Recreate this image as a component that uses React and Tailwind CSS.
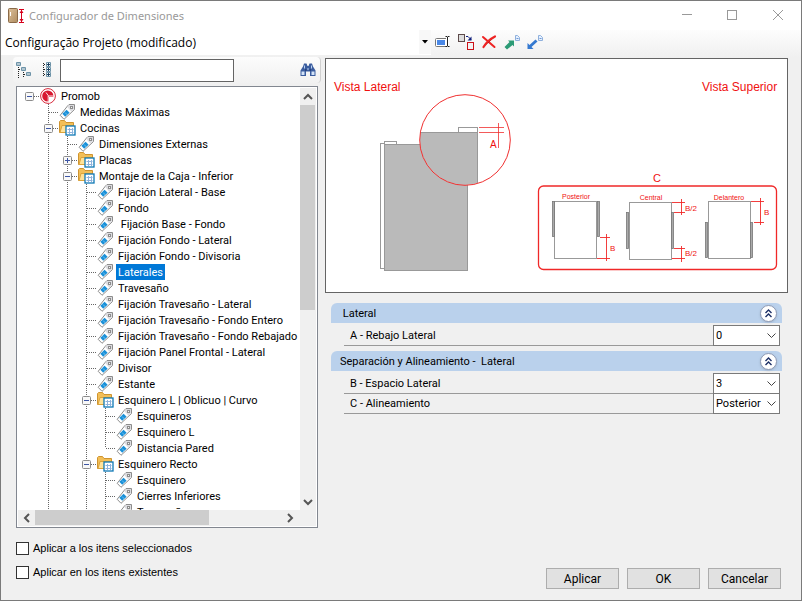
import { useState } from "react";

const TREE = [
  { id: 1, depth: 0, label: "Promob", icon: "promob", state: "open" },
  { id: 2, depth: 1, label: "Medidas Máximas" },
  { id: 3, depth: 1, label: "Cocinas", icon: "folder", state: "open" },
  { id: 4, depth: 2, label: "Dimensiones Externas" },
  { id: 5, depth: 2, label: "Placas", icon: "folder", state: "closed" },
  { id: 6, depth: 2, label: "Montaje de la Caja - Inferior", icon: "folder", state: "open" },
  { id: 7, depth: 3, label: "Fijación Lateral - Base" },
  { id: 8, depth: 3, label: "Fondo" },
  { id: 9, depth: 3, label: " Fijación Base - Fondo" },
  { id: 10, depth: 3, label: "Fijación Fondo - Lateral" },
  { id: 11, depth: 3, label: "Fijación Fondo - Divisoria" },
  { id: 12, depth: 3, label: "Laterales" },
  { id: 13, depth: 3, label: "Travesaño" },
  { id: 14, depth: 3, label: "Fijación Travesaño - Lateral" },
  { id: 15, depth: 3, label: "Fijación Travesaño - Fondo Entero" },
  { id: 16, depth: 3, label: "Fijación Travesaño - Fondo Rebajado" },
  { id: 17, depth: 3, label: "Fijación Panel Frontal - Lateral" },
  { id: 18, depth: 3, label: "Divisor" },
  { id: 19, depth: 3, label: "Estante" },
  { id: 20, depth: 3, label: "Esquinero L | Oblicuo | Curvo", icon: "folder", state: "open" },
  { id: 21, depth: 4, label: "Esquineros" },
  { id: 22, depth: 4, label: "Esquinero L" },
  { id: 23, depth: 4, label: "Distancia Pared", last: true },
  { id: 24, depth: 3, label: "Esquinero Recto", icon: "folder", state: "open" },
  { id: 25, depth: 4, label: "Esquinero" },
  { id: 26, depth: 4, label: "Cierres Inferiores" },
  { id: 27, depth: 4, label: "Travesaño" },
];

function AppIcon() {
  return (
    <svg width="17" height="16" viewBox="0 0 17 16" className="shrink-0">
      <defs>
        <linearGradient id="door" x1="0" y1="0" x2="1" y2="1">
          <stop offset="0" stopColor="#dcc09a" />
          <stop offset="1" stopColor="#b08d61" />
        </linearGradient>
      </defs>
      <rect x="0.5" y="0.5" width="9" height="14" rx="1" fill="url(#door)" stroke="#8a6a48" />
      <path d="M2.5 4v4" stroke="#fff" />
      <path d="M11 1.500h5M11 14.500h5M13.500 2v12" stroke="#d6001c" />
      <path d="M11.500 5l2-3 2 3zM11.500 11l2 3 2-3z" fill="#d6001c" />
    </svg>
  );
}

function TagIcon() {
  return (
    <svg width="18" height="16" viewBox="0 0 18 16">
      <path d="M9.500 2l1.500-1.500h5.500v5L6 15.300l-3.800-4z" fill="#fff" stroke="#8c8c8c" strokeLinejoin="round" />
      <path d="M9.300 3l2-2h4.700v4.200l-2.700 2.500z" fill="#dcdce0" />
      <rect x="12.500" y="2.500" width="2" height="2" fill="#f4f4f4" stroke="#8c8c8c" />
      <path d="M8.600 5.800l3 3-4.400 3.900-2.900-3z" fill="#1a90d8" />
      <path d="M7 8.500l2.500 2.500" stroke="#6dc0ee" />
    </svg>
  );
}

function FolderIcon() {
  return (
    <svg width="18" height="16" viewBox="0 0 18 16">
      <path d="M1.500 12.500v-11l1-1h4l1.500 2h7.500v10z" fill="#f3bf57" stroke="#cf9430" />
      <path d="M4 5.500h11l-2 7H2z" fill="#ffe29a" stroke="#dca43a" />
      <rect x="8" y="6" width="9" height="9" fill="#fff" stroke="#0e78b5" strokeWidth="1.300" />
      <path d="M9.500 9.500h6M9.500 12.500h6M11.500 8v6M14.500 8v6" stroke="#8fb2dc" />
    </svg>
  );
}

function PromobIcon() {
  return (
    <svg width="18" height="16" viewBox="0 0 18 16">
      <circle cx="9" cy="8" r="7.400" fill="#fff" stroke="#d8283a" />
      <circle cx="8.800" cy="8" r="5.600" fill="#d81830" />
      <path d="M9.200 14V7.500M9.200 7.500L7 4.500M9.200 8H14.500" fill="none" stroke="#fff" strokeWidth="0.900" />
      <path d="M10 9h5l-2 4-3 2z" fill="#fff" />
    </svg>
  );
}

function Guide() {
  return (
    <svg width="19" height="16" viewBox="0 0 19 16" className="shrink-0">
      <path d="M9.500 0v16" stroke="#666" strokeDasharray="1 1" />
    </svg>
  );
}

function Elbow({ node }) {
  return (
    <svg width="19" height="16" viewBox="0 0 19 16" className="shrink-0">
      {node.depth > 0 && (
        <path d={node.last ? "M9.500 0v8" : "M9.500 0v16"} stroke="#666" strokeDasharray="1 1" />
      )}
      <path d="M10 8.500h9" stroke="#666" strokeDasharray="1 1" />
      {node.state && (
        <>
          <rect x="5.500" y="4.500" width="8" height="8" rx="1" fill="#f8f8f8" stroke="#8c8c8c" />
          <path d={node.state === "open" ? "M7 8.500h5" : "M7 8.500h5M9.500 6v5"} stroke="#3c55a5" />
        </>
      )}
    </svg>
  );
}

function TreeRow({ node, selected, onSelect }) {
  const Icon = node.icon === "promob" ? PromobIcon : node.icon === "folder" ? FolderIcon : TagIcon;
  return (
    <li className="flex h-4 items-center whitespace-pre">
      {node.depth > 0 && <span className="w-[19px] shrink-0" />}
      {Array.from({ length: Math.max(0, node.depth - 1) }, (_, i) => (
        <Guide key={i} />
      ))}
      {node.state ? (
        <button type="button" aria-label={`Expandir ${node.label}`} className="shrink-0">
          <Elbow node={node} />
        </button>
      ) : (
        <Elbow node={node} />
      )}
      <button type="button" onClick={onSelect} className="flex h-4 items-center gap-0.5">
        <Icon />
        <span className={selected ? "h-4 bg-[#0078d7] px-0.5 leading-[18px] text-white" : "h-4 px-0.5 leading-[18px]"}>
          {node.label}
        </span>
      </button>
    </li>
  );
}

function Chevron({ d }) {
  return (
    <svg width="10" height="10" viewBox="0 0 10 10" fill="none" stroke="#555" strokeWidth="2">
      <path d={d} />
    </svg>
  );
}

function TreePanel() {
  const [selected, setSelected] = useState(12);
  return (
    <div className="ml-[3px] mr-[3px] flex min-h-0 flex-1 flex-col border border-[#828790] bg-white p-px">
      <div className="flex min-h-0 flex-1">
        <ul className="min-w-0 flex-1 overflow-hidden pl-0.5">
          {TREE.map((node) => (
            <TreeRow
              key={node.id}
              node={node}
              selected={node.id === selected}
              onSelect={() => setSelected(node.id)}
            />
          ))}
        </ul>
        <div className="flex w-4 shrink-0 flex-col bg-[#f0f0f0]">
          <button type="button" aria-label="Subir" className="flex h-[17px] items-center justify-center">
            <Chevron d="M1 7l4-4 4 4" />
          </button>
          <div className="h-[48.5%] w-[15px] bg-[#cdcdcd]" />
          <button type="button" aria-label="Bajar" className="mt-auto flex h-[17px] items-center justify-center">
            <Chevron d="M1 3l4 4 4-4" />
          </button>
        </div>
      </div>
      <div className="flex h-4 bg-[#f0f0f0] pr-[18px]">
        <button type="button" aria-label="Izquierda" className="flex w-[17px] items-center justify-center">
          <Chevron d="M7 1L3 5l4 4" />
        </button>
        <div className="h-[15px] w-[62%] bg-[#cdcdcd]" />
        <button type="button" aria-label="Derecha" className="ml-auto flex w-[17px] items-center justify-center">
          <Chevron d="M3 1l4 4-4 4" />
        </button>
      </div>
    </div>
  );
}

function TitleBar() {
  return (
    <header className="flex h-[29px] shrink-0 items-center bg-white pl-[7px]">
      <AppIcon />
      <h1 className="ml-1 flex-1 font-['Noto_Sans','Open_Sans',sans-serif] text-[11px] text-[#999]">
        Configurador de Dimensiones
      </h1>
      <button type="button" aria-label="Minimizar" className="flex w-[45px] justify-center">
        <svg width="12" height="12" viewBox="0 0 12 12" stroke="#999">
          <path d="M1 4.500h10" />
        </svg>
      </button>
      <button type="button" aria-label="Maximizar" className="flex w-[46px] justify-center">
        <svg width="12" height="12" viewBox="0 0 12 12" fill="none" stroke="#999">
          <rect x="1.500" y="0.500" width="9" height="9" />
        </svg>
      </button>
      <button type="button" aria-label="Cerrar" className="flex w-[46px] justify-center">
        <svg width="12" height="12" viewBox="0 0 12 12" stroke="#999">
          <path d="M1 0l10 10M11 0L1 10" />
        </svg>
      </button>
    </header>
  );
}

function SendIcon({ color, flip }) {
  return (
    <svg width="16" height="16" viewBox="0 0 16 16">
      <path
        d={flip ? "M0.500 15V9l2 2 6-5.500 2 2-6 5.500 2 2z" : "M0.500 13l5-5-1.500-1.500h6v6L8.500 11l-5.500 4.500z"}
        fill={color}
      />
      <path d="M11.500 1.500h2l2 2v3h-4z" fill="#e5f0ff" stroke="#8fb0dc" />
      <path d="M12.500 4.500h2" stroke="#6f9ad6" />
    </svg>
  );
}

function ConfigBar() {
  return (
    <div className="flex h-[27px] shrink-0 bg-linear-to-b from-[#fdfdfd] to-[#f0f0f0]">
      <div className="relative h-6 w-[430px]">
        <select
          aria-label="Configuración"
          className="h-[25px] w-full appearance-none bg-white pl-1 font-['Open_Sans','Noto_Sans',sans-serif] text-[12px]"
        >
          <option>Configuração Projeto (modificado)</option>
        </select>
        <span className="pointer-events-none absolute inset-y-0 right-0 flex w-3 items-center justify-center bg-[#f8f8f8]">
          <svg width="6" height="4" viewBox="0 0 6 4">
            <path d="M0 0h6L3 3.500z" />
          </svg>
        </span>
      </div>
      <div className="ml-1 flex h-6 items-center gap-[7px]">
        <button type="button" aria-label="Renombrar">
          <svg width="16" height="16" viewBox="0 0 16 16">
            <rect x="0.500" y="4.500" width="12" height="8" rx="1" fill="#fff" stroke="#777" />
            <rect x="2" y="6" width="8" height="5" fill="#4a88e6" />
            <path d="M12.500 3v10" stroke="#fff" strokeWidth="3" />
            <path d="M10.500 2.500h1.500l.5.500.5-.5h1.500M10.500 12.500h1.500l.5-.5.5.5h1.500M12.500 3v9" fill="none" stroke="#222" />
          </svg>
        </button>
        <button type="button" aria-label="Duplicar">
          <svg width="16" height="16" viewBox="0 0 16 16" fill="none">
            <rect x="0.500" y="0.500" width="6" height="7" fill="#ddd" stroke="#5d4a4a" />
            <rect x="9.500" y="8.500" width="6" height="7" fill="#f3f3f3" stroke="#cc1018" />
            <path d="M8 2.500h2l3 3" stroke="#11207c" />
            <path d="M13.500 2.500v4h-4z" fill="#11207c" />
          </svg>
        </button>
        <button type="button" aria-label="Eliminar">
          <svg width="16" height="16" viewBox="0 0 16 16" stroke="#ee2424" strokeLinecap="round">
            <path d="M2 3l11.500 10" strokeWidth="2" />
            <path d="M14 2.500C9 5 5 9 2.500 13" strokeWidth="2.200" />
          </svg>
        </button>
        <button type="button" aria-label="Exportar">
          <SendIcon color="#2c9b76" />
        </button>
        <button type="button" aria-label="Importar">
          <SendIcon color="#3579d0" flip />
        </button>
      </div>
    </div>
  );
}

function SearchBar() {
  return (
    <div className="flex h-[26px] shrink-0 items-center rounded-sm border-r border-[#d0d0d0] bg-linear-to-b from-[#fcfcfc] to-[#f1f1f1] pl-[3px] pr-1">
      <button type="button" aria-label="Expandir todo">
        <svg width="16" height="16" viewBox="0 0 16 16" fill="none">
          <path d="M2.500 5v11M7.500 10v6M3 7.500h2M8 12.500h2" stroke="#222" strokeDasharray="1 1" />
          <path d="M0.500 0.500h4v3h-4zM5.500 5.500h4v3h-4zM10.500 10.500h4v3h-4zM1 2h3M6 7h3M11 12h3" stroke="#6d93a8" />
        </svg>
      </button>
      <button type="button" aria-label="Contraer todo" className="ml-2">
        <svg width="16" height="16" viewBox="0 0 16 16" fill="none">
          <path d="M3.500 1v14M4 2.500h3M4 7.500h3M4 12.500h3" stroke="#222" strokeDasharray="1 1" />
          <path d="M6.500 0.500h4v4h-4zM6.500 5.500h4v4h-4zM6.500 10.500h4v4h-4z" stroke="#6d93a8" />
          <path d="M7 2.500h3M8.500 1v3M7 7.500h3M8.500 6v3M7 12.500h3M8.500 11v3" stroke="#1d4262" />
        </svg>
      </button>
      <input
        type="text"
        aria-label="Buscar"
        className="ml-1 h-[23px] w-[174px] border border-[#646464] bg-white px-1"
      />
      <button type="button" aria-label="Buscar siguiente" className="ml-auto">
        <svg width="16" height="16" viewBox="0 0 16 16">
          <path d="M4 1.500h2.500l1 2.500h1l1-2.500H12l1 3 2.500 4v5.500H10V9.500H6V14H0.500V8.500L3 4.500z" fill="#3a5c9e" />
          <path d="M1.500 9.500h3V13h-3zM11.500 9.500h3V13h-3z" fill="#d3e3f8" />
          <path d="M4.500 3.500v3M11.500 3.500v3M7 7h2" stroke="#b9d0f0" />
          <path d="M5 8h1.500M9.500 8H11" stroke="#16295e" />
        </svg>
      </button>
    </div>
  );
}

function Preview() {
  return (
    <figure className="border border-[#646464] bg-white">
      <svg
        viewBox="326 59 461 233"
        className="block h-auto w-full"
        fontFamily="Liberation Sans, sans-serif"
        role="img"
        aria-label="Vista lateral y superior"
      >
        <defs>
          <clipPath id="lens">
            <circle cx="465" cy="140" r="45" />
          </clipPath>
        </defs>

        {/* cabinet seen from the side */}
        <g stroke="#999" fill="#fff">
          <rect x="380.500" y="143.500" width="4" height="125" />
          <rect x="384.500" y="141.500" width="12" height="4" />
          <rect x="384.500" y="144.500" width="83" height="126" fill="#bababa" />
        </g>
        <circle cx="465" cy="140" r="45" fill="#fff" />
        <g clipPath="url(#lens)" stroke="#999">
          <rect x="410.500" y="132.500" width="67" height="60" fill="#bababa" />
          <rect x="458.500" y="127.500" width="19" height="5" fill="#fff" />
        </g>
        <g stroke="#f03030" fill="none">
          <circle cx="465" cy="140" r="45.300" />
          <path d="M479 127.500h25M479 132.500h25M498.500 123v25" strokeWidth="0.800" />
        </g>

        {/* three alignments seen from above */}
        <g stroke="#999" fill="#fff">
          <rect x="554.500" y="201.500" width="42" height="57" />
          <rect x="629.500" y="202.500" width="42" height="57" />
          <rect x="708.500" y="201.500" width="42" height="57" />
        </g>
        <g stroke="#777" strokeWidth="0.800" fill="#aaa">
          <rect x="552.500" y="201.500" width="2" height="35" />
          <rect x="597.500" y="201.500" width="2" height="35" />
          <rect x="626.500" y="212.500" width="2" height="36" />
          <rect x="671.500" y="212.500" width="2" height="36" />
          <rect x="705.500" y="222.500" width="2" height="35" />
          <rect x="750.500" y="222.500" width="2" height="35" />
        </g>
        <g stroke="#f02828" fill="none">
          <rect x="538.500" y="186" width="238" height="83.500" rx="5" strokeWidth="1.300" />
          <path
            d="M600 237.500h10M597 258.500h13M606.500 234v27M672 202.500h13M674 212.500h11M681.500 199v16M674 248.500h11M672 258.500h13M681.500 246v16M751 201.500h13M754 222.500h10M760.500 198v27"
            strokeWidth="0.900"
          />
        </g>

        <g fill="#f01010">
          <text x="334" y="91" fontSize="12">Vista Lateral</text>
          <text x="702" y="91" fontSize="12">Vista Superior</text>
          <text x="490" y="148" fontSize="10">A</text>
          <text x="653" y="182" fontSize="11">C</text>
          <g fontSize="7" textAnchor="middle">
            <text x="576" y="199">Posterior</text>
            <text x="651" y="200">Central</text>
            <text x="729" y="200">Delantero</text>
          </g>
          <g fontSize="8">
            <text x="610" y="251">B</text>
            <text x="685" y="211">B/2</text>
            <text x="685" y="256">B/2</text>
            <text x="764" y="215">B</text>
          </g>
        </g>
      </svg>
    </figure>
  );
}

function Section({ title, children }) {
  return (
    <section className="mb-1.5">
      <div className="flex h-5 items-center justify-between rounded-t-md bg-[#bad1ec] pl-[9px] pr-[5px]">
        <h2 className="whitespace-pre pt-0.5">{title}</h2>
        <button
          type="button"
          aria-label="Contraer"
          className="flex size-[17px] items-center justify-center rounded-full border border-[#8f9bb5] bg-white shadow-sm"
        >
          <svg width="9" height="9" viewBox="0 0 9 9" fill="none" stroke="#1c2f66" strokeWidth="1.400">
            <path d="M1.500 4l3-3 3 3M1.500 8l3-3 3 3" />
          </svg>
        </button>
      </div>
      <div className="ml-[13px] mr-0.5 pt-0.5">{children}</div>
    </section>
  );
}

function Field({ id, label, options }) {
  return (
    <div className="-mb-px flex h-[21px]">
      <label htmlFor={id} className="flex flex-1 items-center border-b border-[#999] pl-1.5 pt-0.5">
        {label}
      </label>
      <div className="relative w-[67px]">
        <select
          id={id}
          className="h-full w-full appearance-none border border-[#7a7a7a] bg-white pl-0.5 pr-3"
        >
          {options.map((o) => (
            <option key={o}>{o}</option>
          ))}
        </select>
        <svg
          width="9"
          height="6"
          viewBox="0 0 9 6"
          fill="none"
          stroke="#444"
          className="pointer-events-none absolute right-1 top-2"
        >
          <path d="M0.500 0.500l4 4 4-4" />
        </svg>
      </div>
    </div>
  );
}

function Check({ label }) {
  return (
    <label className="flex h-6 items-center gap-1 font-['Liberation_Sans',Arial,sans-serif]">
      <input type="checkbox" className="size-[13px] appearance-none border border-[#333] bg-white checked:bg-[#0078d7]" />
      {label}
    </label>
  );
}

function DialogButton({ children }) {
  return (
    <button type="button" className="h-[21px] w-[73px] border border-[#adadad] bg-[#e1e1e1] text-[12px] leading-none">
      {children}
    </button>
  );
}

export default function App() {
  return (
    <div className="flex h-screen flex-col border border-[#7a7a7a] bg-[#f0f0f0] font-[Roboto,'Liberation_Sans',sans-serif] text-[11px] leading-4 text-black">
      <TitleBar />
      <ConfigBar />
      <main className="flex min-h-0 flex-1 gap-1 pl-3 pr-[13px]">
        <div className="flex w-[308px] shrink-0 flex-col">
          <SearchBar />
          <div className="mt-[3px] flex min-h-0 flex-1 flex-col">
            <TreePanel />
          </div>
        </div>
        <div className="min-w-0 flex-1 pt-px">
          <Preview />
          <div className="ml-1.5 mr-1.5 mt-2.5">
            <Section title=" Lateral">
              <Field id="rebajo" label="A - Rebajo Lateral" options={["0", "1", "2"]} />
            </Section>
            <Section title="Separación y Alineamiento -  Lateral">
              <Field id="espacio" label="B - Espacio Lateral" options={["3", "4", "5"]} />
              <Field id="alineamiento" label="C - Alineamiento" options={["Posterior", "Central", "Delantero"]} />
            </Section>
          </div>
        </div>
      </main>
      <footer className="flex shrink-0 items-end justify-between pb-[11px] pl-[15px] pr-[20px] pt-2">
        <div className="pb-[5px]">
          <Check label="Aplicar a los itens seleccionados" />
          <Check label="Aplicar en los itens existentes" />
        </div>
        <div className="flex gap-2">
          <DialogButton>Aplicar</DialogButton>
          <DialogButton>OK</DialogButton>
          <DialogButton>Cancelar</DialogButton>
        </div>
      </footer>
    </div>
  );
}
